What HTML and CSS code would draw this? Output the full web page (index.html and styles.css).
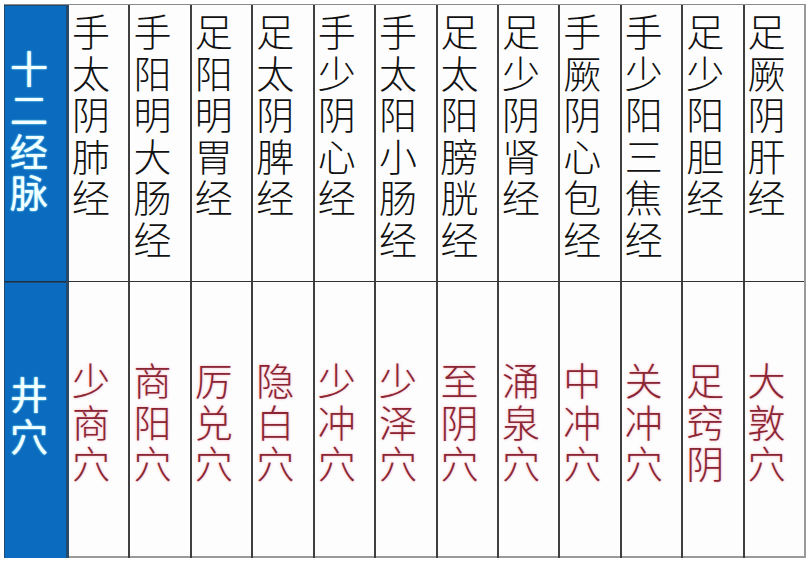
FILE: index.html
```html
<!DOCTYPE html>
<html lang="zh-CN">
<head>
<meta charset="utf-8">
<title>十二经脉 井穴</title>
<link rel="stylesheet" href="styles.css">
</head>
<body>
<div class="table">
  <div class="head head-top"><span class="v">十二经脉</span></div>
  <div class="cell top"><span class="v">手太阴肺经</span></div>
  <div class="cell top"><span class="v">手阳明大肠经</span></div>
  <div class="cell top"><span class="v">足阳明胃经</span></div>
  <div class="cell top"><span class="v">足太阴脾经</span></div>
  <div class="cell top"><span class="v">手少阴心经</span></div>
  <div class="cell top"><span class="v">手太阳小肠经</span></div>
  <div class="cell top"><span class="v">足太阳膀胱经</span></div>
  <div class="cell top"><span class="v">足少阴肾经</span></div>
  <div class="cell top"><span class="v">手厥阴心包经</span></div>
  <div class="cell top"><span class="v">手少阳三焦经</span></div>
  <div class="cell top"><span class="v">足少阳胆经</span></div>
  <div class="cell top"><span class="v">足厥阴肝经</span></div>

  <div class="head head-bottom"><span class="v">井穴</span></div>
  <div class="cell bottom"><span class="v">少商穴</span></div>
  <div class="cell bottom"><span class="v">商阳穴</span></div>
  <div class="cell bottom"><span class="v">厉兑穴</span></div>
  <div class="cell bottom"><span class="v">隐白穴</span></div>
  <div class="cell bottom"><span class="v">少冲穴</span></div>
  <div class="cell bottom"><span class="v">少泽穴</span></div>
  <div class="cell bottom"><span class="v">至阴穴</span></div>
  <div class="cell bottom"><span class="v">涌泉穴</span></div>
  <div class="cell bottom"><span class="v">中冲穴</span></div>
  <div class="cell bottom"><span class="v">关冲穴</span></div>
  <div class="cell bottom"><span class="v">足窍阴</span></div>
  <div class="cell bottom"><span class="v">大敦穴</span></div>
</div>
</body>
</html>
```

FILE: styles.css
```css
* { box-sizing: border-box; }

html, body {
  margin: 0;
  padding: 0;
  background: #ffffff;
}

body {
  font-family: "Noto Sans CJK SC", "Noto Sans", sans-serif;
  font-weight: 300;
}

.table {
  margin: 4px 0 0 4px;
  width: 802px;
  height: 554px;
  display: grid;
  grid-template-columns: 63px repeat(12, 1fr);
  grid-template-rows: 277px 277px;
  border-top: 1px solid #8a8a8a;
  border-right: 2px solid #9a9a9a;
  border-bottom: 2px solid #9a9a9a;
  background: #fdfdfd;
}

.v {
  display: block;
  width: 1em;
  font-size: 38px;
  line-height: 41.5px;
  word-break: break-all;
}

.head {
  background: #0b6cbf;
  border: 1px solid #1f4b72;
  color: #f2ffff;
  font-weight: 400;
  text-shadow: 0 0 2px #8fe9ff, 0 0 1px #bff4ff;
  padding-left: 5px;
  display: flex;
  align-items: center;
}

.head-top {
  padding-bottom: 30px;
  border-bottom: 1px solid #1a2f44;
}

.head-bottom {
  padding-bottom: 14px;
}

.cell {
  border-left: 2px solid #3f3f3f;
  padding-left: 3px;
}

.cell.top {
  border-bottom: 1px solid #333333;
  padding-top: 4px;
  color: #111111;
}

.cell.bottom {
  display: flex;
  align-items: center;
  color: #8a2634;
  text-shadow: 0 0 3px #f4b6c2, 0 0 1px #f7c9d1;
}

.head + .cell { border-left-color: #2a4a66; }
```
